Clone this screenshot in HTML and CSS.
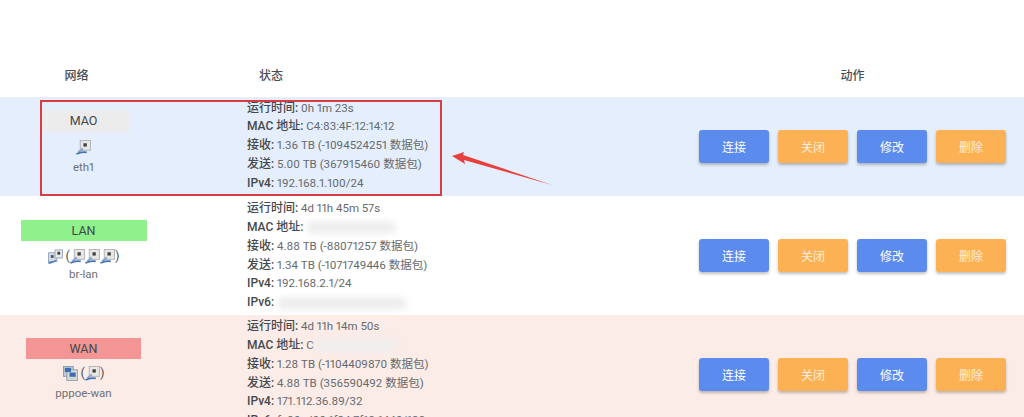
FILE: index.html
```html
<!DOCTYPE html>
<html lang="zh-CN">
<head>
<meta charset="utf-8">
<title>网络</title>
<link rel="stylesheet" href="styles.css">
</head>
<body>
<svg class="defs" width="0" height="0" aria-hidden="true">
  <defs>
    <symbol id="eth" viewBox="0 0 16 16">
      <rect x="4.500" y="0.500" width="11" height="10.500" fill="#e6e6e3" stroke="#a9aeb5" stroke-width=".9"/>
      <rect x="8" y="3.500" width="3.500" height="3.500" fill="#3f3f3f"/>
      <path d="M6.500 8 1.500 12.500 4 13 8 10.500Z" fill="#8fa8cc"/>
      <path d="M0.500 15c3.500-2 7-2.500 11-1.800" stroke="#4472b4" stroke-width="1.800" fill="none"/>
    </symbol>
    <symbol id="bridge" viewBox="0 0 16 16">
      <rect x="0.500" y="4" width="9" height="9.500" fill="#d5dce6" stroke="#8e9fb6" stroke-width=".9"/>
      <rect x="7.500" y="1" width="8" height="8.500" fill="#e9eaea" stroke="#8e9fb6" stroke-width=".9"/>
      <rect x="3" y="6.500" width="3" height="3" fill="#47566c"/>
      <rect x="10" y="3" width="3" height="3" fill="#3f3f3f"/>
      <path d="M0.500 15.200c3-1 5.500-1 8-3.200" stroke="#4d7bb8" stroke-width="1.700" fill="none"/>
    </symbol>
    <symbol id="ppp" viewBox="0 0 16 16">
      <rect x="0.500" y="0.500" width="10.500" height="10.500" fill="#bccbda" stroke="#8496aa" stroke-width=".9"/>
      <rect x="4" y="4" width="11.500" height="11.500" fill="#d4d8d5" stroke="#8f9ba3" stroke-width=".9"/>
      <rect x="2" y="2" width="6.500" height="4.500" fill="#3a6cae"/>
      <rect x="7" y="7" width="6.500" height="4.500" fill="#3a6cae"/>
    </symbol>
  </defs>
</svg>

<main class="page">
  <div class="head grid">
    <div class="cell-net">网络</div>
    <div class="cell-status">状态</div>
    <div class="cell-act">动作</div>
  </div>

  <section class="row row-mao grid">
    <div class="cell-net">
      <div class="tag tag-mao">MAO</div>
      <div class="icons"><svg class="ico"><use href="#eth"/></svg></div>
      <div class="dev">eth1</div>
    </div>
    <div class="cell-status status">
      <div class="line"><b>运行时间:</b> 0h 1m 23s</div>
      <div class="line"><b>MAC 地址:</b> C4:83:4F:12:14:12</div>
      <div class="line"><b>接收:</b> 1.36 TB (-1094524251 数据包)</div>
      <div class="line"><b>发送:</b> 5.00 TB (367915460 数据包)</div>
      <div class="line"><b>IPv4:</b> 192.168.1.100/24</div>
    </div>
    <div class="cell-act actions">
      <button class="btn blue">连接</button><button class="btn orange">关闭</button><button class="btn blue">修改</button><button class="btn orange">删除</button>
    </div>
  </section>

  <section class="row row-lan grid">
    <div class="cell-net">
      <div class="tag tag-lan">LAN</div>
      <div class="icons"><svg class="ico"><use href="#bridge"/></svg><span class="paren">(</span><svg class="ico"><use href="#eth"/></svg><svg class="ico"><use href="#eth"/></svg><svg class="ico"><use href="#eth"/></svg><span>)</span></div>
      <div class="dev">br-lan</div>
    </div>
    <div class="cell-status status">
      <div class="line"><b>运行时间:</b> 4d 11h 45m 57s</div>
      <div class="line"><b>MAC 地址:</b> <span class="smear smear-mac"></span></div>
      <div class="line"><b>接收:</b> 4.88 TB (-88071257 数据包)</div>
      <div class="line"><b>发送:</b> 1.34 TB (-1071749446 数据包)</div>
      <div class="line"><b>IPv4:</b> 192.168.2.1/24</div>
      <div class="line"><b>IPv6:</b> <span class="smear smear-ip6"></span></div>
    </div>
    <div class="cell-act actions">
      <button class="btn blue">连接</button><button class="btn orange">关闭</button><button class="btn blue">修改</button><button class="btn orange">删除</button>
    </div>
  </section>

  <section class="row row-wan grid">
    <div class="cell-net">
      <div class="tag tag-wan">WAN</div>
      <div class="icons"><svg class="ico"><use href="#ppp"/></svg><span class="paren">(</span><svg class="ico"><use href="#eth"/></svg><span>)</span></div>
      <div class="dev">pppoe-wan</div>
    </div>
    <div class="cell-status status">
      <div class="line"><b>运行时间:</b> 4d 11h 14m 50s</div>
      <div class="line"><b>MAC 地址:</b> C<span class="smear smear-wan"></span></div>
      <div class="line"><b>接收:</b> 1.28 TB (-1104409870 数据包)</div>
      <div class="line"><b>发送:</b> 4.88 TB (356590492 数据包)</div>
      <div class="line"><b>IPv4:</b> 171.112.36.89/32</div>
      <div class="line"><b>IPv6:</b> fe80::d00:1f24:7f18:1440/128</div>
    </div>
    <div class="cell-act actions">
      <button class="btn blue">连接</button><button class="btn orange">关闭</button><button class="btn blue">修改</button><button class="btn orange">删除</button>
    </div>
  </section>

  <div class="callout"></div>
  <svg class="arrow" viewBox="0 0 103 36" aria-hidden="true">
    <path d="M1 4 13 0 12 3 101 33 13 8 14 12Z" fill="#e8403c"/>
  </svg>
</main>
</body>
</html>
```

FILE: styles.css
```css
* { box-sizing: border-box; }
html, body { margin: 0; height: 417px; overflow: hidden; background: #fff; }
body { font: 11.5px/18.8px Roboto, "Noto Sans CJK SC", sans-serif; color: #5f6368; font-variant-numeric: proportional-nums; }
.defs { position: absolute; }
.page { position: relative; height: 417px; overflow: hidden; }

.grid { display: grid; grid-template-columns: 167px 1fr 357px; }
.head { height: 97px; padding-top: 67px; font-size: 12px; font-weight: 500; color: #4a4d52; }
.head .cell-net { padding-right: 14px; }
.head .cell-status { padding-left: 92px; }
.head .cell-act { text-align: center; padding-left: 14px; }

.row { align-items: center; }
.row-mao { height: 99px; background: #e4eefc; }
.row-lan { height: 119px; background: #fff; }
.row-wan { height: 119px; background: #fbece8; }

.cell-net { text-align: center; }
.row .cell-net { align-self: start; }
.cell-status { padding-left: 80px; }
.status { color: #666a6e; }
.line { height: 18.800px; white-space: nowrap; }
.status b { font-size: 12px; font-weight: 500; color: #45484c; }
.row-mao .status { margin-top: -2px; }
.row-wan .status { margin-top: -2px; }

.tag { height: 21px; line-height: 21px; margin: 0 auto; font-size: 12.500px; color: #44484c; }
.tag-mao { width: 88px; height: 22px; line-height: 22px; background: #ececec; margin-top: 13px; padding-right: 4px; position: relative; left: 2px; }
.tag-lan { width: 126px; background: #90f08c; margin-top: 24px; }
.tag-wan { width: 115px; background: #f29594; margin-top: 23px; }

.icons { display: flex; justify-content: center; align-items: center; height: 18px; margin-top: 6px; font-size: 13px; color: #555; }
.ico { width: 15px; height: 15px; flex: none; }
.paren { margin-left: 3px; }
.row-wan .icons { margin-top: 5px; }
.dev { line-height: 16px; margin-top: 1px; font-size: 11.500px; color: #6d7175; }
.row-mao .dev { margin-top: 3px; }
.row-wan .dev { margin-top: 3px; }

.actions { display: flex; gap: 9px; padding-left: 32px; }
.btn { width: 70px; height: 33px; border: 0; border-radius: 3px; padding: 0; color: #fff; font: 12px Roboto, "Noto Sans CJK SC", sans-serif; box-shadow: 0 2px 3px rgba(0,0,0,.25); }
.blue { background: #5a8bed; }
.orange { background: #fdb155; color: #ffeedd; }

.smear { display: inline-block; height: 13px; vertical-align: middle; border-radius: 7px; background: #eeeeee; filter: blur(3px); }
.smear-mac { width: 90px; }
.smear-ip6 { width: 130px; }
.smear-wan { width: 84px; background: #f0eeed; }

.callout { position: absolute; left: 40px; top: 100px; width: 402px; height: 96px; border: 2.500px solid #d93c42; }
.arrow { position: absolute; left: 451px; top: 152px; width: 103px; height: 36px; }
```
